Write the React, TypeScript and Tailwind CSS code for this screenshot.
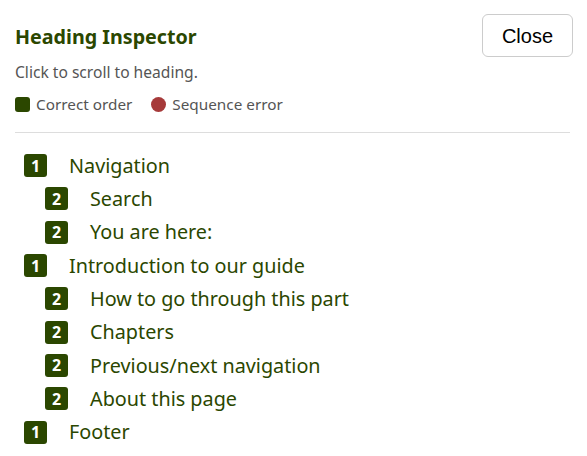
import React from "react";

type Heading = { level: number; text: string };

const headings: Heading[] = [
  { level: 1, text: "Navigation" },
  { level: 2, text: "Search" },
  { level: 2, text: "You are here:" },
  { level: 1, text: "Introduction to our guide" },
  { level: 2, text: "How to go through this part" },
  { level: 2, text: "Chapters" },
  { level: 2, text: "Previous/next navigation" },
  { level: 2, text: "About this page" },
  { level: 1, text: "Footer" },
];

export default function App() {
  return (
    <div
      className="w-[587px] h-[456px] overflow-hidden bg-white pl-[15px] pr-[14px] pt-[14px]"
      style={{ fontFamily: '"Noto Sans", "Open Sans", sans-serif' }}
    >
      <div className="flex items-start justify-between">
        <div className="pt-[10px]">
          <h2 className="text-[19.7px] leading-[26px] font-bold text-[#2b4700]">
            Heading Inspector
          </h2>
          <p className="mt-[11px] text-[15.6px] leading-[22px] text-[#555]">
            Click to scroll to heading.
          </p>
          <div className="mt-[10px] flex items-center text-[15.3px] leading-[22px] text-[#555]">
            <span className="mr-[6px] inline-block h-[15px] w-[15px] rounded-[3px] bg-[#2b4700]" />
            Correct order
            <span className="ml-[19px] mr-[6px] inline-block h-[15px] w-[15px] rounded-full bg-[#a63a3a]" />
            Sequence error
          </div>
        </div>
        <button
          className="h-[43px] w-[91px] rounded-[6px] border border-[#ccc] bg-white text-[20px] text-black"
          style={{ fontFamily: '"Liberation Sans", Arial, sans-serif' }}
        >
          Close
        </button>
      </div>
      <div className="mt-[17px] mr-[3px] border-t border-[#ddd]" />
      <ul className="mt-[16px]">
        {headings.map((h, i) => (
          <li
            key={i}
            className={`flex h-[33.3px] items-center text-[19.8px] text-[#2b4700] ${
              h.level === 1 ? "pl-[9px]" : "pl-[30px]"
            }`}
          >
            <span className="mr-[22px] flex h-[23px] w-[23px] items-center justify-center rounded-[3px] bg-[#2b4700] text-[16px] font-bold text-white">
              {h.level}
            </span>
            {h.text}
          </li>
        ))}
      </ul>
    </div>
  );
}
